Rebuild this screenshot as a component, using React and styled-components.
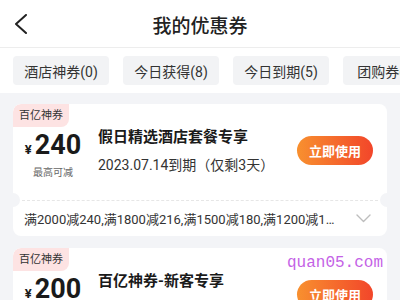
import React from "react";
import styled, { createGlobalStyle } from "styled-components";

const GlobalStyle = createGlobalStyle`
  body {
    margin: 0;
    background: #f3f4f7;
    font-family: Roboto, "Noto Sans CJK SC", sans-serif;
    color: #222;
  }
`;

const Tabs = ["酒店神券(0)", "今日获得(8)", "今日到期(5)", "团购券(10)"];

const Coupons = [
  {
    amount: "240",
    title: "假日精选酒店套餐专享",
    date: "2023.07.14到期（仅剩3天）",
    rules:
      "满2000减240,满1800减216,满1500减180,满1200减144,满1000减120,满800减96",
  },
  {
    amount: "200",
    title: "百亿神券-新客专享",
    date: "2023.07.31至2023.08.31",
    rules: "满2000减200,满1500减150,满1000减100",
  },
];

function BackIcon() {
  return (
    <svg width="14" height="20" viewBox="0 0 14 20">
      <path d="M12 1 L2 10 L12 19" fill="none" stroke="#222" strokeWidth="2" strokeLinecap="round" strokeLinejoin="round" />
    </svg>
  );
}

function ChevronDown() {
  return (
    <svg width="15" height="9" viewBox="0 0 15 9">
      <path d="M1 1 L7.5 7.5 L14 1" fill="none" stroke="#bdbdbd" strokeWidth="1.4" strokeLinecap="round" strokeLinejoin="round" />
    </svg>
  );
}

function CouponCard({ amount, title, date, rules }) {
  return (
    <Card>
      <Badge>百亿神券</Badge>
      <Row>
        <PriceCol>
          <Price>
            <Yen>¥</Yen>
            {amount}
          </Price>
          <PriceNote>最高可减</PriceNote>
        </PriceCol>
        <Info>
          <CardTitle>{title}</CardTitle>
          <DateLine>{date}</DateLine>
        </Info>
        <UseButton>立即使用</UseButton>
      </Row>
      <Divider />
      <Rules>
        <RuleText>{rules}</RuleText>
        <ChevronDown />
      </Rules>
    </Card>
  );
}

export default function App() {
  return (
    <Page>
      <GlobalStyle />
      <Header>
        <BackButton>
          <BackIcon />
        </BackButton>
        <Title>我的优惠券</Title>
        <span />
      </Header>
      <TabBar>
        {Tabs.map((t) => (
          <Tab key={t}>{t}</Tab>
        ))}
      </TabBar>
      <List>
        {Coupons.map((c) => (
          <CouponCard key={c.title} {...c} />
        ))}
      </List>
      <Watermark>quan05.com</Watermark>
    </Page>
  );
}

const Page = styled.div`
  position: relative;
  width: 400px;
  height: 300px;
  overflow: hidden;
  background: #f3f4f7;
`;

const Header = styled.div`
  height: 47px;
  background: #fff;
  border-bottom: 1px solid #ededed;
  display: grid;
  grid-template-columns: 50px 1fr 50px;
  align-items: center;
`;

const BackButton = styled.div`
  display: flex;
  align-items: center;
  padding-left: 14px;
  height: 100%;
`;

const Title = styled.div`
  text-align: center;
  font-size: 19px;
  color: #222;
  font-weight: 500;
  margin-top: 2px;
`;

const TabBar = styled.div`
  height: 45px;
  box-sizing: border-box;
  padding: 8px 13px;
  background: #fff;
  display: flex;
  gap: 14px;
  overflow: hidden;
`;

const Tab = styled.div`
  flex: 0 0 96px;
  height: 29px;
  border-radius: 4px;
  background: #f2f3f5;
  color: #333;
  font-size: 14px;
  display: flex;
  align-items: center;
  justify-content: center;
  white-space: nowrap;
`;

const List = styled.div`
  padding: 11px 13px;
  display: flex;
  flex-direction: column;
  gap: 12px;
`;

const Card = styled.div`
  position: relative;
  background: #fff;
  border-radius: 8px;
  overflow: hidden;
`;

const Badge = styled.div`
  display: inline-block;
  height: 23px;
  line-height: 23px;
  padding: 0 6px;
  font-size: 11px;
  color: #333;
  background: #fde3e3;
  border-radius: 8px 0 8px 0;
`;

const Row = styled.div`
  display: flex;
  align-items: flex-start;
  padding: 0 14px 21px 0;
`;

const PriceCol = styled.div`
  width: 80px;
  margin-top: 5px;
  display: flex;
  flex-direction: column;
  align-items: center;
`;

const Price = styled.div`
  font-size: 27px;
  line-height: 26px;
  font-weight: 700;
  color: #1a1a1a;
  white-space: nowrap;
`;

const Yen = styled.span`
  font-size: 13px;
  margin-right: 3px;
`;

const PriceNote = styled.div`
  margin-top: 4px;
  font-size: 10px;
  line-height: 12px;
  color: #666;
`;

const Info = styled.div`
  flex: 1;
  margin-left: 5px;
  min-width: 0;
`;

const CardTitle = styled.div`
  font-size: 15px;
  line-height: 20px;
  font-weight: 700;
  color: #1a1a1a;
  white-space: nowrap;
`;

const DateLine = styled.div`
  margin-top: 8px;
  font-size: 14px;
  line-height: 20px;
  color: #333;
  white-space: nowrap;
`;

const UseButton = styled.div`
  flex: 0 0 76px;
  height: 29px;
  margin-top: 9px;
  border-radius: 15px;
  background: linear-gradient(90deg, #f8902f, #f2462a);
  color: #fff;
  font-size: 13px;
  font-weight: 700;
  display: flex;
  align-items: center;
  justify-content: center;
`;

const Divider = styled.div`
  position: relative;
  margin: 0 9px;
  border-top: 1px dashed #e6e6e6;

  &::before,
  &::after {
    content: "";
    position: absolute;
    top: -8px;
    width: 14px;
    height: 14px;
    border-radius: 50%;
    background: #f3f4f7;
  }
  &::before {
    left: -16px;
  }
  &::after {
    right: -16px;
  }
`;

const Rules = styled.div`
  height: 35px;
  display: flex;
  align-items: center;
  padding: 0 16px 0 11px;
  gap: 16px;
`;

const RuleText = styled.div`
  flex: 1;
  min-width: 0;
  font-size: 13px;
  color: #333;
  white-space: nowrap;
  overflow: hidden;
  text-overflow: ellipsis;
`;

const Watermark = styled.div`
  position: absolute;
  left: 287px;
  top: 255px;
  font-family: "Liberation Mono", monospace;
  font-size: 16px;
  line-height: 16px;
  color: #c462e6;
  pointer-events: none;
`;
